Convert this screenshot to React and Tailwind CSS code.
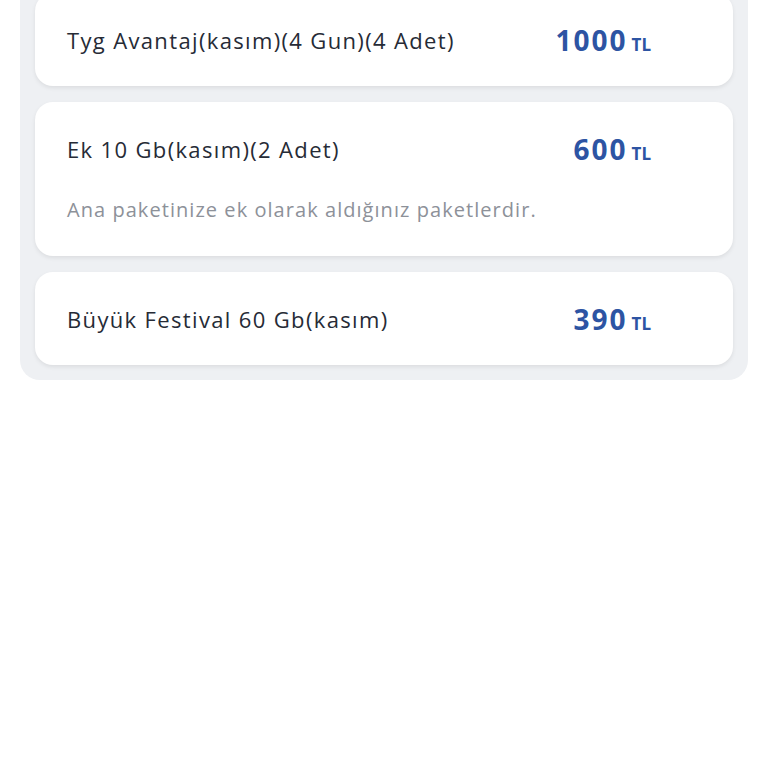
import React from "react";

const packages = [
  { id: 1, title: "Tyg Avantaj(kasım)(4 Gun)(4 Adet)", price: "1000" },
  {
    id: 2,
    title: "Ek 10 Gb(kasım)(2 Adet)",
    price: "600",
    note: "Ana paketinize ek olarak aldığınız paketlerdir.",
  },
  { id: 3, title: "Büyük Festival 60 Gb(kasım)", price: "390" },
];

const PackageCard = ({ item }) => (
  <div className="bg-white rounded-[18px] shadow-[0_2px_4px_rgba(0,0,0,0.08)] pl-8 pr-[82px] pt-[33px] pb-[32px]">
    <div className="flex items-center justify-between h-7">
      <span className="text-[22px] font-medium text-[#262b36] tracking-[1.35px]">{item.title}</span>
      <span className="flex items-baseline gap-[4px] text-[#2d54a3] font-bold">
        <span className="text-[28px] tracking-[2px]">{item.price}</span>
        <span className="text-[17px]">TL</span>
      </span>
    </div>
    {item.note && (
      <p className="mt-[33px] text-[20px] text-[#8d9199] leading-7 tracking-[1.05px]">{item.note}</p>
    )}
  </div>
);

export default function App() {
  return (
    <div className="min-h-screen bg-white px-5 font-['Open_Sans','Lato',sans-serif]">
      <div className="-mt-[22px] bg-[#eef0f3] rounded-[20px] p-[15px] flex flex-col gap-4">
        {packages.map((p) => (
          <PackageCard key={p.id} item={p} />
        ))}
      </div>
    </div>
  );
}
